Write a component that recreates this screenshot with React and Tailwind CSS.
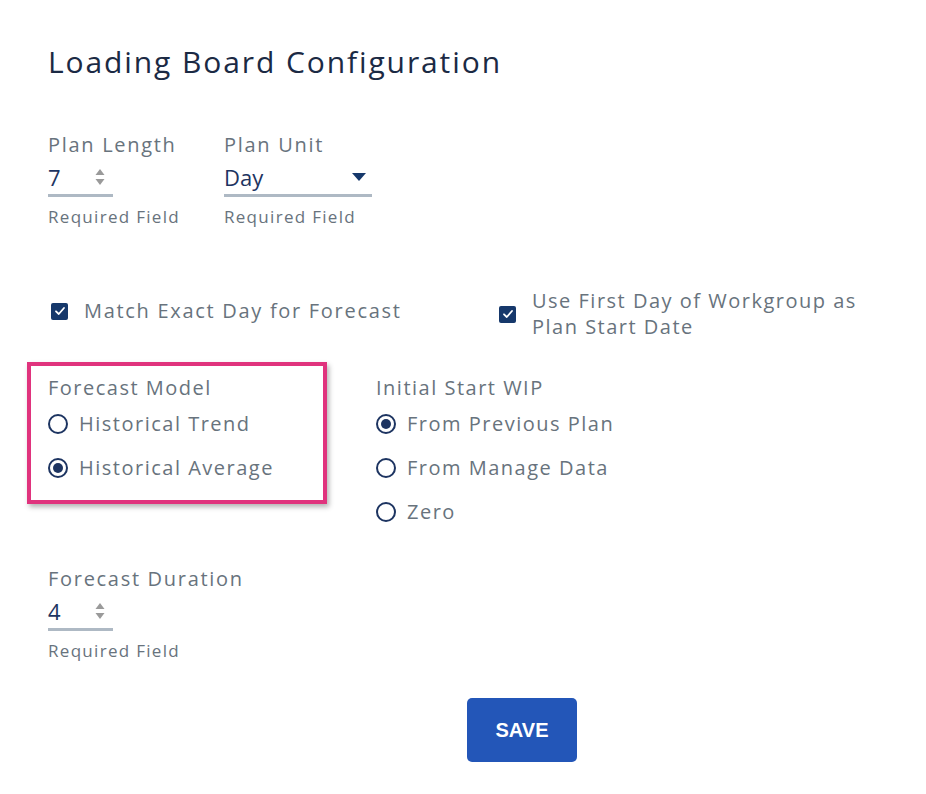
import React from 'react';

const Spinner = () => (
    <svg width="12" height="24" viewBox="0 0 12 24" className="text-[#9a9a9a]">
        <path d="M6 4 L10.5 10 L1.5 10 Z" fill="currentColor" />
        <path d="M6 20 L10.5 14 L1.5 14 Z" fill="currentColor" />
    </svg>
);

const NumberField = ({ label, value }) => (
    <div className="flex flex-col">
        <span className="text-[20px] leading-[28px] tracking-[1.7px] text-[#68737d]">{label}</span>
        <div className="w-[65px] h-[38px] flex items-center justify-between border-b-[3px] border-[#aeb9c4] pr-[7px]">
            <span className="text-[22px] text-[#1d3461] leading-none">{value}</span>
            <Spinner />
        </div>
        <span className="mt-[8px] text-[17px] leading-[24px] tracking-[1.3px] text-[#68737d]">Required Field</span>
    </div>
);

const Checkbox = () => (
    <span className="w-[17px] h-[17px] rounded-[2px] bg-[#16386b] flex items-center justify-center shrink-0">
        <svg width="12" height="12" viewBox="0 0 12 12">
            <path d="M2 6.3 L4.8 9 L10 3" fill="none" stroke="white" strokeWidth="1.8" strokeLinecap="round" strokeLinejoin="round" />
        </svg>
    </span>
);

const Radio = ({ checked, label }) => (
    <div className="flex items-center gap-[11px] h-[44px]">
        <span className="w-[20px] h-[20px] rounded-full border-2 border-[#1d3461] flex items-center justify-center shrink-0">
            {checked && <span className="w-[10px] h-[10px] rounded-full bg-[#1d3461]" />}
        </span>
        <span className="text-[20px] tracking-[1.5px] text-[#68737d]">{label}</span>
    </div>
);

export default function App() {
    return (
        <div className="w-[926px] h-[794px] bg-white pl-[48px] pt-[40px] font-['Open_Sans',sans-serif]">
            {/* Titre */}
            <h1 className="text-[30px] leading-[44px] text-[#1b2a44] tracking-[1.9px]">Loading Board Configuration</h1>

            {/* Plan */}
            <div className="flex gap-[44px] mt-[47px]">
                <NumberField label="Plan Length" value="7" />
                <div className="flex flex-col">
                    <span className="text-[20px] leading-[28px] tracking-[1.7px] text-[#68737d]">Plan Unit</span>
                    <div className="w-[148px] h-[38px] flex items-center justify-between border-b-[3px] border-[#aeb9c4] pr-[6px]">
                        <span className="text-[22px] text-[#1d3461] leading-none">Day</span>
                        <svg width="14" height="8" viewBox="0 0 14 8">
                            <path d="M0 0 L14 0 L7 8 Z" fill="#16386b" />
                        </svg>
                    </div>
                    <span className="mt-[8px] text-[17px] leading-[24px] tracking-[1.3px] text-[#68737d]">Required Field</span>
                </div>
            </div>

            {/* Options */}
            <div className="flex items-center mt-[59px]">
                <div className="w-[451px] flex items-center gap-[16px] pl-[3px] mt-[-6px]">
                    <Checkbox />
                    <span className="text-[20px] tracking-[1.7px] text-[#68737d]">Match Exact Day for Forecast</span>
                </div>
                <div className="flex items-center gap-[16px]">
                    <Checkbox />
                    <span className="text-[20px] leading-[26px] tracking-[1.5px] text-[#68737d] w-[340px]">Use First Day of Workgroup as Plan Start Date</span>
                </div>
            </div>

            <div className="flex mt-[22px]">
                <div className="w-[300px] h-[142px] ml-[-21px] mr-[49px] border-4 border-[#e0337d] shadow-[2px_3px_5px_rgba(0,0,0,0.3)] pl-[17px] pt-[8px]">
                    <div className="text-[20px] leading-[28px] tracking-[1.5px] text-[#68737d]">Forecast Model</div>
                    <Radio label="Historical Trend" />
                    <Radio checked label="Historical Average" />
                </div>
                <div className="pt-[12px]">
                    <div className="text-[20px] leading-[28px] tracking-[1.5px] text-[#68737d]">Initial Start WIP</div>
                    <Radio checked label="From Previous Plan" />
                    <Radio label="From Manage Data" />
                    <Radio label="Zero" />
                </div>
            </div>

            <div className="mt-[31px]">
                <NumberField label="Forecast Duration" value="4" />
            </div>

            <div className="mt-[35px] ml-[419px]">
                <button className="w-[110px] h-[64px] rounded-[5px] bg-[#2356b8] text-white text-[20px] font-bold font-['Liberation_Sans',sans-serif]">SAVE</button>
            </div>
        </div>
    );
}
